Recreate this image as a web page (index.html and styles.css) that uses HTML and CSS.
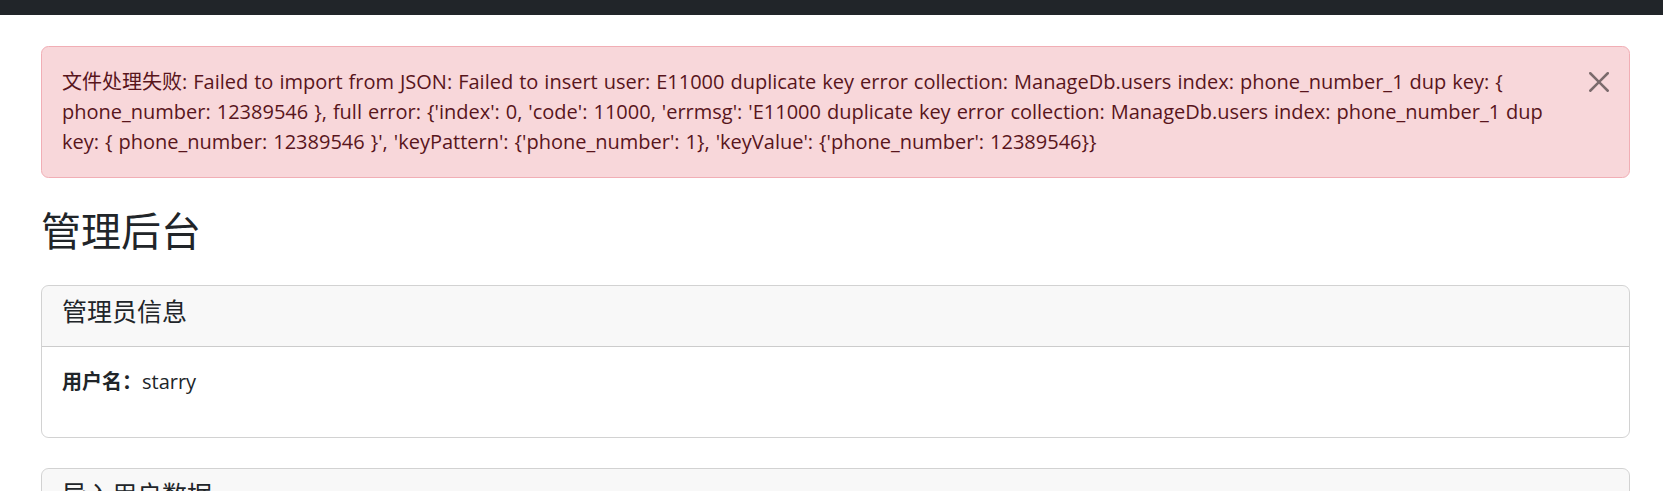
FILE: index.html
```html
<!DOCTYPE html>
<html lang="zh-CN">
<head>
<meta charset="utf-8">
<title>管理后台</title>
<link rel="stylesheet" href="styles.css">
</head>
<body>
<nav class="topbar"></nav>
<main class="page">
  <div class="alert alert-danger" role="alert">
    文件处理失败: Failed to import from JSON: Failed to insert user: E11000 duplicate key error collection: ManageDb.users index: phone_number_1 dup key: { phone_number: 12389546 }, full error: {'index': 0, 'code': 11000, 'errmsg': 'E11000 duplicate key error collection: ManageDb.users index: phone_number_1 dup key: { phone_number: 12389546 }', 'keyPattern': {'phone_number': 1}, 'keyValue': {'phone_number': 12389546}}
    <button type="button" class="btn-close" aria-label="Close">
      <svg viewBox="0 0 16 16" width="20" height="20"><path d="M.293.293a1 1 0 0 1 1.414 0L8 6.586 14.293.293a1 1 0 1 1 1.414 1.414L9.414 8l6.293 6.293a1 1 0 0 1-1.414 1.414L8 9.414l-6.293 6.293a1 1 0 0 1-1.414-1.414L6.586 8 .293 1.707a1 1 0 0 1 0-1.414z"/></svg>
    </button>
  </div>

  <h1 class="page-title">管理后台</h1>

  <section class="card">
    <div class="card-header"><h5 class="card-title">管理员信息</h5></div>
    <div class="card-body">
      <p class="info"><strong>用户名：</strong>starry</p>
    </div>
  </section>

  <section class="card">
    <div class="card-header"><h5 class="card-title">导入用户数据</h5></div>
    <div class="card-body">
      <p class="info">请选择 JSON 文件</p>
    </div>
  </section>
</main>
</body>
</html>
```
FILE: styles.css
```css
html, body {
  margin: 0;
  padding: 0;
}
body {
  font-family: "Open Sans", "Noto Sans CJK SC", sans-serif;
  font-size: 20px;
  line-height: 1.5;
  color: #212529;
  background: #fff;
}
.topbar {
  height: 15px;
  background: #212529;
}
.page {
  padding: 31px 33px 0 41px;
}
.alert {
  position: relative;
  padding: 20px 60px 20px 20px;
  margin-bottom: 20px;
  border: 1px solid #f1aeb5;
  border-radius: 7.5px;
  background: #f8d7da;
  color: #58151c;
  word-spacing: 0.8px;
}
.btn-close {
  position: absolute;
  top: 0;
  right: 0;
  padding: 25px 20px;
  border: 0;
  background: transparent;
  opacity: .5;
  line-height: 0;
  cursor: pointer;
}
.btn-close svg {
  display: block;
  fill: #000;
}
.page-title {
  margin: 28.5px 0 30px;
  font-size: 40px;
  font-weight: 400;
  line-height: 1.2;
}
.card {
  border: 1px solid rgba(0,0,0,.175);
  border-radius: 7.5px;
  margin-bottom: 30px;
  overflow: hidden;
}
.card-header {
  padding: 10px 20px;
  background: rgba(33,37,41,.03);
  border-bottom: 1px solid rgba(0,0,0,.175);
}
.card-title {
  margin: 0 0 10px;
  font-size: 25px;
  font-weight: 400;
  line-height: 1.2;
}
.card-body {
  padding: 20px;
}
.info {
  margin: 0 0 20px;
}
.info strong {
  font-weight: 700;
}
```
